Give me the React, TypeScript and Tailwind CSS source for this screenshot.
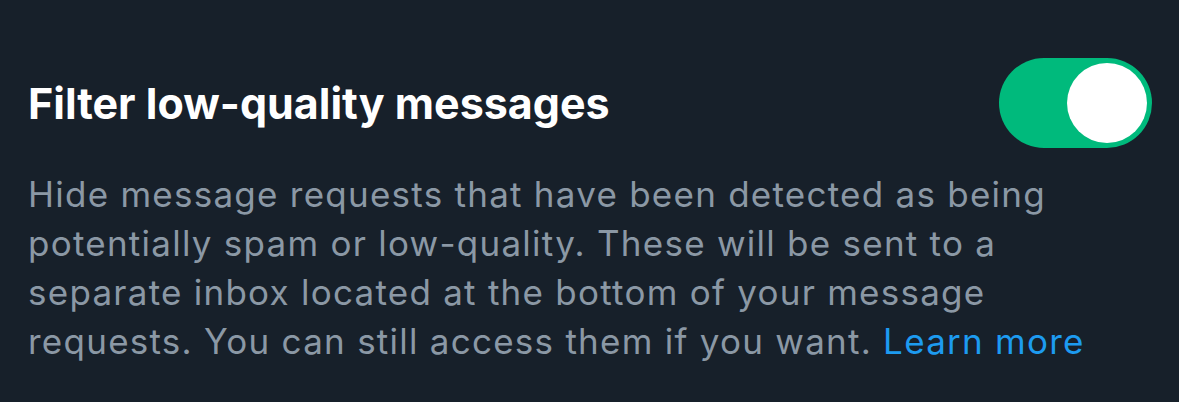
export default function App() {
  return (
    <div className="h-[402px] w-[1179px] bg-[#17202a] font-['Inter','Liberation_Sans',sans-serif]">
      <div className="flex items-center justify-between pl-[28px] pr-[27px] pt-[58px]">
        <h1 className="text-[43px] font-bold leading-[50px] text-white">
          Filter low-quality messages
        </h1>
        <button
          type="button"
          aria-pressed="true"
          className="flex h-[90px] w-[153px] items-center justify-end rounded-full bg-[#00ba7c] p-[5px]"
        >
          <span className="block h-[80px] w-[80px] rounded-full bg-white" />
        </button>
      </div>
      <p className="mt-[22px] w-[1100px] pl-[28px] text-[35px] leading-[49px] tracking-[1.25px] text-[#8b98a5]">
        Hide message requests that have been detected as being potentially spam
        or low-quality. These will be sent to a separate inbox located at the
        bottom of your message requests. You can still access them if you
        want. <span className="text-[#1d9bf0]">Learn more</span>
      </p>
    </div>
  );
}
